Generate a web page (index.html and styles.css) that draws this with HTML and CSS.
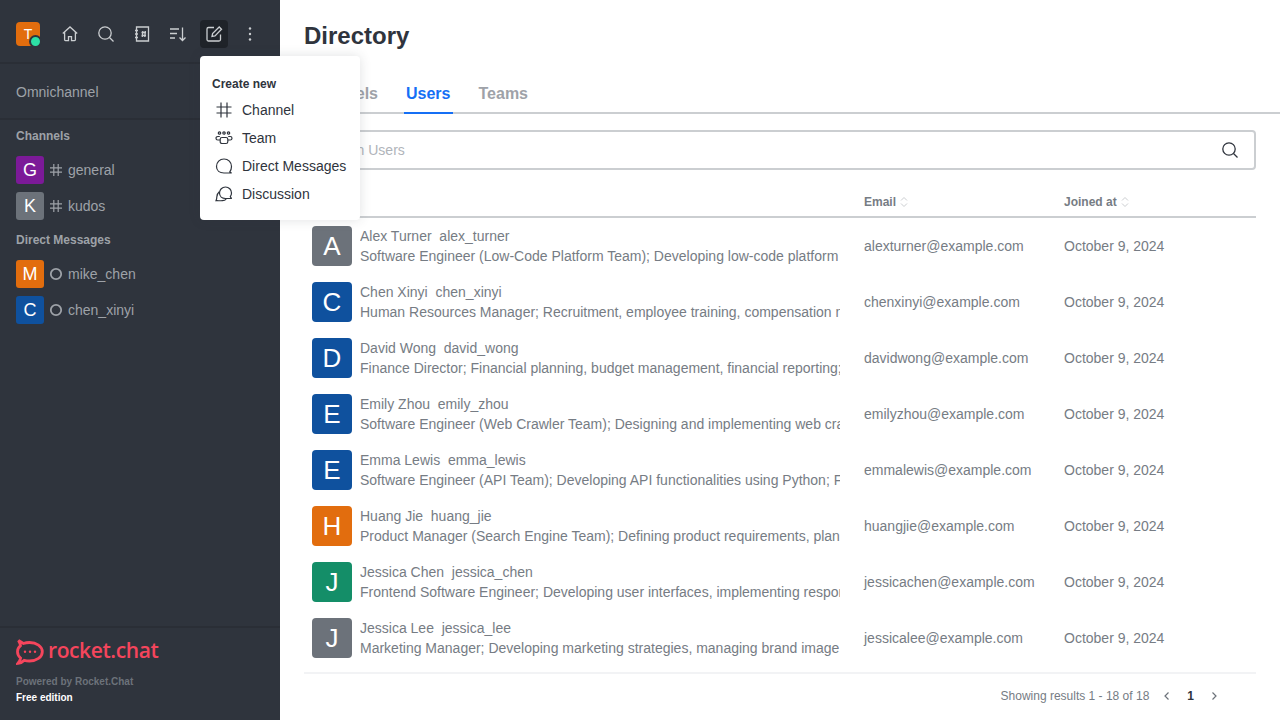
FILE: index.html
```html
<!DOCTYPE html>
<html lang="en">
<head>
<meta charset="UTF-8">
<meta name="viewport" content="width=device-width, initial-scale=1.0">
<title>Directory</title>
<link rel="stylesheet" href="styles.css">
</head>
<body>

<div class="app">
    <aside class="sidebar">
        <div class="topbar">
            <div class="me">
                <div class="me-avatar">T</div>
                <span class="me-status"></span>
            </div>
            <div class="top-actions">
                <span class="top-btn">
                    <svg viewBox="0 0 20 20"><path d="M2.800 9.500 10 3l7.200 6.500M4.600 8v7.800c0 .5.300.8.800.8h3.100v-4h3v4h3.100c.5 0 .8-.3.8-.8V8"/></svg>
                </span>
                <span class="top-btn">
                    <svg viewBox="0 0 20 20"><circle cx="9" cy="9" r="6.200"/><path d="m13.500 13.500 4 4"/></svg>
                </span>
                <span class="top-btn">
                    <svg viewBox="0 0 20 20"><path d="M4.500 3h12v14h-12zM3 6.500h3M3 10h3M3 13.500h3M9.500 8.500h4.500M9.500 11.500h4.500M10.800 7l-.5 6M13.300 7l-.5 6"/></svg>
                </span>
                <span class="top-btn">
                    <svg viewBox="0 0 20 20"><path d="M2 5h9M2 9.500h7M2 14h5M14.500 3.500v13M11.500 13.500l3 3 3-3"/></svg>
                </span>
                <span class="top-btn top-btn-active">
                    <svg viewBox="0 0 20 20"><path d="M16.500 10.500v5a1.500 1.500 0 0 1-1.500 1.500H4.500A1.500 1.500 0 0 1 3 15.500V5a1.500 1.500 0 0 1 1.500-1.500H10"/><path d="m8 12.500.6-3L15.200 3l2.300 2.300-6.500 6.600z"/></svg>
                </span>
                <span class="top-btn">
                    <svg viewBox="0 0 20 20"><circle class="dot" cx="10" cy="4.500" r="1.200"/><circle class="dot" cx="10" cy="10" r="1.200"/><circle class="dot" cx="10" cy="15.500" r="1.200"/></svg>
                </span>
            </div>
        </div>

        <div class="omni">Omnichannel</div>

        <div class="room-list">
            <div class="section-title">Channels</div>
            <div class="room">
                <div class="room-avatar bg-purple">G</div>
                <svg class="room-icon" viewBox="0 0 14 14"><path d="M1 4.800h12M1 9.200h12M4.800 1v12M9.200 1v12"/></svg>
                <span>general</span>
            </div>
            <div class="room">
                <div class="room-avatar bg-gray">K</div>
                <svg class="room-icon" viewBox="0 0 14 14"><path d="M1 4.800h12M1 9.200h12M4.800 1v12M9.200 1v12"/></svg>
                <span>kudos</span>
            </div>
            <div class="section-title section-dm">Direct Messages</div>
            <div class="room">
                <div class="room-avatar bg-orange">M</div>
                <svg class="room-icon room-status" viewBox="0 0 14 14"><circle cx="7" cy="7" r="5.200"/></svg>
                <span>mike_chen</span>
            </div>
            <div class="room">
                <div class="room-avatar bg-blue">C</div>
                <svg class="room-icon room-status" viewBox="0 0 14 14"><circle cx="7" cy="7" r="5.200"/></svg>
                <span>chen_xinyi</span>
            </div>
        </div>

        <div class="side-footer">
            <div class="brand">
                <svg class="brand-mark" viewBox="0 0 28 26"><path d="M7.500 4.500 2.500 1.500c1 1.700 1.700 3.500 2 5.200C2.600 8.200 1.500 10.300 1.500 12.800c0 2.600 1.200 4.700 3.100 6.200-.3 2-1.200 3.800-2.600 5.300 2.500-.3 4.800-1.300 6.300-3 1.700.5 3.300.7 5.200.7 7 0 12.800-3.800 12.800-9.200S20.500 3.500 13.500 3.500c-2.200 0-4.200.3-6 1z"/><circle class="brand-dot" cx="9" cy="12.800" r="1.200"/><circle class="brand-dot" cx="14" cy="12.800" r="1.200"/><circle class="brand-dot" cx="19" cy="12.800" r="1.200"/></svg>
                <span class="brand-name">rocket.chat</span>
            </div>
            <div class="powered">Powered by Rocket.Chat</div>
            <div class="edition">Free edition</div>
        </div>
    </aside>

    <main class="main">
        <h1>Directory</h1>

        <div class="tabs">
            <span class="tab">Channels</span>
            <span class="tab tab-active">Users</span>
            <span class="tab">Teams</span>
        </div>

        <div class="search">
            <span class="search-text">Search Users</span>
            <svg viewBox="0 0 20 20"><circle cx="9" cy="9" r="6.200"/><path d="m13.500 13.500 4 4"/></svg>
        </div>

        <table class="users">
            <thead>
                <tr>
                    <th class="col-name">Name</th>
                    <th class="col-email">Email <svg class="sort" viewBox="0 0 8 12"><path d="M1 4.500 4 1.500l3 3M1 7.500l3 3 3-3"/></svg></th>
                    <th class="col-date">Joined at <svg class="sort" viewBox="0 0 8 12"><path d="M1 4.500 4 1.500l3 3M1 7.500l3 3 3-3"/></svg></th>
                </tr>
            </thead>
            <tbody>
                <tr>
                    <td><div class="user"><div class="avatar bg-gray">A</div><div class="info"><div class="who">Alex Turner&nbsp; alex_turner</div><div class="bio">Software Engineer (Low-Code Platform Team); Developing low-code platform features and tools</div></div></div></td>
                    <td>alexturner@example.com</td>
                    <td>October 9, 2024</td>
                </tr>
                <tr>
                    <td><div class="user"><div class="avatar bg-blue">C</div><div class="info"><div class="who">Chen Xinyi&nbsp; chen_xinyi</div><div class="bio">Human Resources Manager; Recruitment, employee training, compensation management</div></div></div></td>
                    <td>chenxinyi@example.com</td>
                    <td>October 9, 2024</td>
                </tr>
                <tr>
                    <td><div class="user"><div class="avatar bg-blue">D</div><div class="info"><div class="who">David Wong&nbsp; david_wong</div><div class="bio">Finance Director; Financial planning, budget management, financial reporting; Overseeing</div></div></div></td>
                    <td>davidwong@example.com</td>
                    <td>October 9, 2024</td>
                </tr>
                <tr>
                    <td><div class="user"><div class="avatar bg-blue">E</div><div class="info"><div class="who">Emily Zhou&nbsp; emily_zhou</div><div class="bio">Software Engineer (Web Crawler Team); Designing and implementing web crawlers at scale</div></div></div></td>
                    <td>emilyzhou@example.com</td>
                    <td>October 9, 2024</td>
                </tr>
                <tr>
                    <td><div class="user"><div class="avatar bg-blue">E</div><div class="info"><div class="who">Emma Lewis&nbsp; emma_lewis</div><div class="bio">Software Engineer (API Team); Developing API functionalities using Python; Fixing bugs</div></div></div></td>
                    <td>emmalewis@example.com</td>
                    <td>October 9, 2024</td>
                </tr>
                <tr>
                    <td><div class="user"><div class="avatar bg-orange">H</div><div class="info"><div class="who">Huang Jie&nbsp; huang_jie</div><div class="bio">Product Manager (Search Engine Team); Defining product requirements, planning releases</div></div></div></td>
                    <td>huangjie@example.com</td>
                    <td>October 9, 2024</td>
                </tr>
                <tr>
                    <td><div class="user"><div class="avatar bg-green">J</div><div class="info"><div class="who">Jessica Chen&nbsp; jessica_chen</div><div class="bio">Frontend Software Engineer; Developing user interfaces, implementing responsive layouts</div></div></div></td>
                    <td>jessicachen@example.com</td>
                    <td>October 9, 2024</td>
                </tr>
                <tr>
                    <td><div class="user"><div class="avatar bg-gray">J</div><div class="info"><div class="who">Jessica Lee&nbsp; jessica_lee</div><div class="bio">Marketing Manager; Developing marketing strategies, managing brand image and campaigns</div></div></div></td>
                    <td>jessicalee@example.com</td>
                    <td>October 9, 2024</td>
                </tr>
            </tbody>
        </table>

        <div class="pager">
            <span>Showing results 1 - 18 of 18</span>
            <svg class="pager-arrow pager-prev" viewBox="0 0 12 12"><path d="M7.500 2.500 4 6l3.500 3.500"/></svg>
            <span class="pager-num">1</span>
            <svg class="pager-arrow" viewBox="0 0 12 12"><path d="M4.500 2.500 8 6 4.500 9.500"/></svg>
        </div>
    </main>

    <div class="create-menu">
        <div class="menu-title">Create new</div>
        <div class="menu-item">
            <svg viewBox="0 0 20 20"><path d="M2.500 7h15M2.500 13h15M7 2.500v15M13 2.500v15"/></svg>
            <span>Channel</span>
        </div>
        <div class="menu-item">
            <svg viewBox="0 0 20 20"><circle cx="5.500" cy="5" r="1.200"/><circle cx="10" cy="5" r="1.200"/><circle cx="14.500" cy="5" r="1.200"/><path d="M5.800 8.500H3.800C2.700 8.500 2 9.200 2 10.200s.7 1.800 1.800 1.800h2.400M14.200 8.500h2C17.300 8.500 18 9.200 18 10.200s-.7 1.800-1.800 1.800h-2.400M8 9.500h4c1.100 0 1.800.7 1.800 1.800v2.400c0 1.100-.7 1.800-1.800 1.800H8c-1.100 0-1.800-.7-1.800-1.800v-2.400c0-1.100.7-1.800 1.800-1.800z"/></svg>
            <span>Team</span>
        </div>
        <div class="menu-item">
            <svg viewBox="0 0 20 20"><path d="M15.800 15.800c1-1.300 1.700-3.200 1.700-5.300C17.500 6.300 14.300 3 10 3S2.500 6.300 2.500 10.500 5.700 17 10 17h7.700c-.8-.2-1.500-.6-1.900-1.200z"/></svg>
            <span>Direct Messages</span>
        </div>
        <div class="menu-item">
            <svg viewBox="0 0 20 20"><path d="M16.300 12.500c.8-1 1.200-2.200 1.200-3.500 0-3.300-2.600-6-6-6s-6 2.700-6 6 2.600 5.500 6 5.500h6.300c-.7-.3-1.200-1-1.500-2z"/><path d="M5.500 7.500C3.800 9 2.800 10.800 2.800 13c0 1.200-.2 2.500-.8 3.700 2-.1 4.700.2 6.500 0 1.500-.1 2.800-.6 3.700-1.500"/></svg>
            <span>Discussion</span>
        </div>
    </div>
</div>

</body>
</html>
```

FILE: styles.css
```css
* {
    box-sizing: border-box;
}

body {
    margin: 0;
    font-family: "Liberation Sans", Arial, sans-serif;
    background-color: #fff;
    overflow: hidden;
}

.app {
    position: relative;
    display: flex;
    width: 1280px;
    height: 720px;
    overflow: hidden;
}

/* sidebar */
.sidebar {
    display: flex;
    flex-direction: column;
    width: 280px;
    flex-shrink: 0;
    background-color: #2f343d;
    color: #9ea2a8;
}

.topbar {
    display: flex;
    align-items: center;
    justify-content: space-between;
    height: 64px;
    padding: 6px 16px 0 16px;
    border-bottom: 2px solid #2a2e36;
}

.me {
    position: relative;
    width: 24px;
    height: 24px;
}

.me-avatar {
    display: flex;
    align-items: center;
    justify-content: center;
    width: 24px;
    height: 24px;
    border-radius: 4px;
    background-color: #e26d0e;
    color: #fff;
    font-size: 14px;
}

.me-status {
    position: absolute;
    right: -2px;
    bottom: -2px;
    width: 13px;
    height: 13px;
    border: 2px solid #2f343d;
    border-radius: 50%;
    background-color: #2de0a5;
}

.top-actions {
    display: flex;
    gap: 8px;
}

.top-btn {
    display: flex;
    align-items: center;
    justify-content: center;
    width: 28px;
    height: 28px;
    border-radius: 4px;
}

.top-btn svg {
    width: 20px;
    height: 20px;
    fill: none;
    stroke: #cbced1;
    stroke-width: 1.300;
}

.top-btn .dot {
    fill: #cbced1;
    stroke: none;
}

.top-btn-active {
    background-color: #1f2329;
}

.omni {
    display: flex;
    align-items: center;
    height: 56px;
    padding: 2px 16px 0 16px;
    border-bottom: 2px solid #2a2e36;
    font-size: 14px;
}

.room-list {
    flex: 1;
    padding-top: 8px;
}

.section-title {
    height: 24px;
    padding: 0 16px;
    font-size: 12px;
    font-weight: bold;
    line-height: 16px;
}

.section-dm {
    height: 32px;
    padding-top: 8px;
}

.room {
    display: flex;
    align-items: center;
    height: 36px;
    padding: 0 16px;
    font-size: 14px;
}

.room-avatar {
    display: flex;
    align-items: center;
    justify-content: center;
    width: 28px;
    height: 28px;
    border-radius: 3px;
    color: #fff;
    font-size: 18px;
}

.room-icon {
    width: 14px;
    height: 14px;
    margin: 0 5px 0 5px;
    fill: none;
    stroke: #9ea2a8;
    stroke-width: 1.200;
}

.room-status {
    stroke-width: 1.800;
}

.bg-purple {
    background-color: #7c1a98;
}

.bg-gray {
    background-color: #6c727a;
}

.bg-orange {
    background-color: #e26d0e;
}

.bg-blue {
    background-color: #0f519e;
}

.bg-green {
    background-color: #148e68;
}

.side-footer {
    height: 94px;
    padding: 10px 16px 0 16px;
    border-top: 2px solid #2a2e36;
}

.brand {
    display: flex;
    align-items: center;
    gap: 4px;
    height: 28px;
}

.brand-mark {
    width: 28px;
    height: 26px;
    fill: none;
    stroke: #f5455c;
    stroke-width: 2.800;
}

.brand-mark .brand-dot {
    fill: #f5455c;
    stroke: none;
}

.brand-name {
    margin-top: -4px;
    color: #f5455c;
    font-family: "Open Sans", sans-serif;
    font-size: 21px;
    font-weight: 600;
    letter-spacing: -.4px;
    line-height: 28px;
}

.powered {
    margin-top: 8px;
    color: #6c727a;
    font-size: 10px;
    font-weight: bold;
    line-height: 16px;
}

.edition {
    color: #fff;
    font-size: 10px;
    font-weight: bold;
    line-height: 16px;
}

/* directory */
.main {
    flex: 1;
    padding: 0 24px;
    color: #767c84;
}

h1 {
    height: 72px;
    margin: 0;
    color: #2f343d;
    font-size: 24px;
    font-weight: bold;
    line-height: 72px;
}

.tabs {
    display: flex;
    height: 42px;
    margin-right: -24px;
    border-bottom: 2px solid #cbced1;
}

.tab {
    height: 42px;
    margin: 0 12px;
    padding: 0 2px;
    color: #9ea2a8;
    font-size: 16px;
    font-weight: bold;
    line-height: 44px;
}

.tab:first-child {
    margin-left: 0;
}

.tab-active {
    border-bottom: 2px solid #156ff5;
    color: #156ff5;
}

.search {
    display: flex;
    align-items: center;
    justify-content: space-between;
    height: 40px;
    margin-top: 16px;
    padding: 0 14px;
    border: 2px solid #cbced1;
    border-radius: 4px;
    color: #b0b4ba;
    font-size: 14px;
}

.search svg {
    width: 20px;
    height: 20px;
    fill: none;
    stroke: #2f343d;
    stroke-width: 1.300;
}

.users {
    width: 952px;
    margin-top: 16px;
    border-collapse: separate;
    border-spacing: 0;
    table-layout: fixed;
}

.users th {
    height: 32px;
    padding: 2px 8px 0 8px;
    border-bottom: 2px solid #cbced1;
    font-size: 12px;
    font-weight: bold;
    text-align: left;
}

.col-name {
    width: 552px;
}

.col-email {
    width: 200px;
}

.sort {
    width: 8px;
    height: 12px;
    margin-left: 1px;
    vertical-align: -2px;
    fill: none;
    stroke: #cbced1;
    stroke-width: 1;
}

.users td {
    height: 56px;
    padding: 0 8px;
    font-size: 14px;
    white-space: nowrap;
}

.user {
    display: flex;
    align-items: center;
    gap: 8px;
}

.avatar {
    display: flex;
    align-items: center;
    justify-content: center;
    flex-shrink: 0;
    width: 40px;
    height: 40px;
    border-radius: 4px;
    color: #fff;
    font-size: 26px;
}

.info {
    width: 480px;
    overflow: hidden;
    line-height: 20px;
}

.pager {
    display: flex;
    align-items: center;
    justify-content: flex-end;
    height: 46px;
    margin-top: 6px;
    padding-right: 35px;
    border-top: 2px solid #f2f3f5;
    font-size: 12px;
}

.pager-arrow {
    width: 12px;
    height: 12px;
    margin: 0 1px 0 11px;
    fill: none;
    stroke: #6c727a;
    stroke-width: 1.200;
}

.pager-prev {
    margin: 0 0 0 12px;
}

.pager-num {
    margin-left: 14px;
    margin-right: 3px;
    color: #2f343d;
    font-weight: bold;
}

/* popup */
.create-menu {
    position: absolute;
    left: 200px;
    top: 56px;
    width: 160px;
    height: 164px;
    padding: 20px 12px 0 12px;
    border-radius: 4px;
    background-color: #fff;
    box-shadow: 0 0 12px rgba(47, 52, 61, .15);
    color: #2f343d;
}

.menu-title {
    height: 20px;
    font-size: 12px;
    font-weight: bold;
    line-height: 16px;
}

.menu-item {
    display: flex;
    align-items: center;
    gap: 8px;
    height: 28px;
    margin-left: 2px;
    font-size: 14px;
    white-space: nowrap;
}

.menu-item svg {
    width: 20px;
    height: 20px;
    flex-shrink: 0;
    fill: none;
    stroke: #2f343d;
    stroke-width: 1.200;
}
```
